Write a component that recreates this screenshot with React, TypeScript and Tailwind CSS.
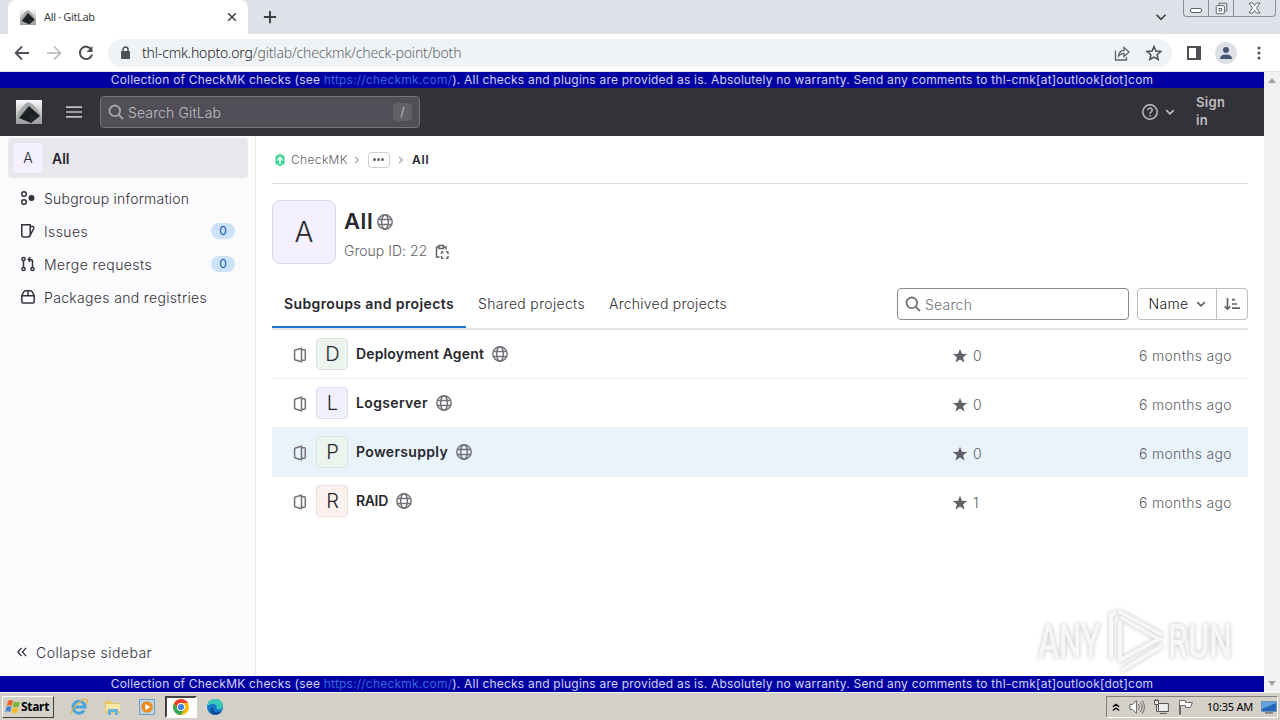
import type { ReactNode } from 'react'
import clsx from 'clsx'

type IconProps = { className?: string; children: ReactNode; size?: number; sw?: number }

function Icon({ className, children, size = 16, sw = 1.5 }: IconProps) {
  return (
    <svg
      width={size}
      height={size}
      viewBox="0 0 16 16"
      fill="none"
      stroke="currentColor"
      strokeWidth={sw}
      className={clsx('shrink-0', className)}
    >
      {children}
    </svg>
  )
}

const Globe = ({ className }: { className?: string }) => (
  <Icon className={clsx('text-[#737278]', className)} sw={1.5}>
    <circle cx="8" cy="8" r="7.2" />
    <ellipse cx="8" cy="8" rx="3.4" ry="7.2" />
    <path d="M1.3 5.6h13.4M1.3 10.4h13.4" />
  </Icon>
)

const Magnifier = ({ className }: { className?: string }) => (
  <Icon className={className} sw={1.8}>
    <circle cx="6.8" cy="6.8" r="5.3" />
    <path d="M10.8 10.8L15 15" />
  </Icon>
)

const Chevron = ({ className }: { className?: string }) => (
  <Icon size={12} sw={2.2} className={className}>
    <path d="M3 5.5l5 5 5-5" />
  </Icon>
)

const ProjectIcon = () => (
  <Icon sw={1.5} className="mt-0.5 text-[#737278]">
    <path d="M9.500 1.200v13.600L3.300 13a1 1 0 0 1-.7-1V4a1 1 0 0 1 .7-1z" />
    <path d="M10 2.700h2.300a1 1 0 0 1 1 1v8.600a1 1 0 0 1-1 1H10" />
  </Icon>
)

/* Dark crystal on a grey gradient, used as favicon and site logo */
function Crystal({ className }: { className?: string }) {
  return (
    <svg viewBox="0 0 26 24" preserveAspectRatio="none" className={clsx('shrink-0', className)}>
      <defs>
        <linearGradient id="crystalBg" x1="0" y1="0" x2="0" y2="1">
          <stop offset="0" stopColor="#fafafa" />
          <stop offset="1" stopColor="#9a9a9c" />
        </linearGradient>
      </defs>
      <rect width="26" height="24" fill="url(#crystalBg)" />
      <path d="M0 20Q3 7 12 2q10 3 14 18v2H0z" fill="#a5a8a9" />
      <path d="M13 6l11 10-9 7-12-5z" fill="#1b2022" />
      <path d="M13 6l-4 7-5 4z" fill="#343a3c" />
      <path d="M15 23l8-7-11-1z" fill="#24292b" />
    </svg>
  )
}

function TabStrip() {
  return (
    <div className="flex h-[34px] shrink-0 bg-[#dee1e8] pl-2">
      <div className="flex h-full w-60 items-center rounded-t-lg bg-white pl-3 pr-2.5">
        <Crystal className="h-4 w-4" />
        <span className="ml-2 flex-1 font-[Noto_Sans] text-[11px] tracking-[-0.35px] text-[#3c4043]">All · GitLab</span>
        <Icon size={12} sw={2} className="text-[#3c4043]">
          <path d="M3 3l10 10M13 3L3 13" />
        </Icon>
      </div>
      <Icon size={14} sw={2.2} className="ml-[15px] mt-2.5 text-[#3c4043]">
        <path d="M8 1v14M1 8h14" />
      </Icon>
      <Icon size={12} sw={2.2} className="ml-auto mr-4 mt-[11px] text-[#3c4043]">
        <path d="M2 5l6 6 6-6" />
      </Icon>
      <div className="mr-1 flex h-[17px] w-[93px] rounded-b border border-t-0 border-[#8b8e94] text-[#60646b]">
        <div className="flex w-[25px] items-end justify-center border-r border-[#8b8e94] pb-[3px]">
          <span className="h-[5px] w-3 rounded-[2px] border border-[#60646b] bg-white" />
        </div>
        <div className="flex w-[25px] items-center justify-center border-r border-[#8b8e94]">
          <Icon size={13} sw={1.2}>
            <path d="M5 4V1.500h9.500V11H12" />
            <rect x="1.500" y="4.500" width="10" height="10" rx="1" fill="#fff" />
            <rect x="5" y="8" width="3" height="3" />
          </Icon>
        </div>
        <div className="flex flex-1 items-center justify-center">
          <svg width="13" height="12" viewBox="0 0 13 12" fill="#fff" stroke="currentColor">
            <path d="M1 1h3.500l2 2.500L8.500 1H12L8.600 6 12 11H8.500l-2-2.500L4.500 11H1l3.400-5z" />
          </svg>
        </div>
      </div>
    </div>
  )
}

function AddressBar() {
  return (
    <div className="flex h-[38px] shrink-0 items-center border-b border-[#dfe1e4] bg-white">
      <Icon sw={1.8} className="ml-3.5 text-[#4d5156]">
        <path d="M15 8H2M8 1.500L1.600 8 8 14.500" />
      </Icon>
      <Icon sw={1.600} className="ml-4 text-[#b4b6b9]">
        <path d="M1 8h13M8 1.500L14.400 8 8 14.500" />
      </Icon>
      <Icon sw={2} className="ml-4 text-[#4d5156]">
        <path d="M13.300 4.400A6.200 6.200 0 1 0 14.100 9.500" />
        <path d="M14.500 1v6H8.500z" fill="currentColor" stroke="none" />
      </Icon>
      <div className="ml-3.5 flex h-7 w-[1064px] items-center rounded-full bg-[#f0f3f5] pl-3 pr-2.5">
        <svg width="11" height="14" viewBox="0 0 11 14" className="shrink-0 text-[#4d5156]">
          <rect x="1" y="5" width="9" height="8" rx="1" fill="currentColor" />
          <path d="M3 5.500V3.500a2.500 2.500 0 0 1 5 0v2" fill="none" stroke="currentColor" strokeWidth="1.500" />
        </svg>
        <span className="ml-[11px] flex-1 whitespace-nowrap font-[Noto_Sans] text-sm font-light tracking-[-0.18px] text-[#5f6368]">
          <span className="text-[#202124]">thl-cmk.hopto.org</span>/gitlab/checkmk/check-point/both
        </span>
        <Icon sw={1.300} className="text-[#5f6368]">
          <path d="M1.500 5.500v9.500h11v-3M4.500 11c.5-4 3-5.500 5.500-5.500V2.500l5 4.500-5 4.500V8.500c-2.500 0-4 .7-5.500 2.500z" />
        </Icon>
        <Icon sw={1.500} className="ml-4 text-[#4d5156]">
          <path d="M8 1.500l1.900 4.600 4.900.4-3.700 3.200 1.100 4.800L8 12l-4.200 2.500 1.100-4.800L1.200 6.500l4.900-.4z" />
        </Icon>
      </div>
      <svg width="14" height="14" viewBox="0 0 14 14" className="ml-[15px] text-[#4d5156]">
        <path d="M1 1h12v12H1z" fill="none" stroke="currentColor" strokeWidth="2" />
        <path d="M9 1h4v12H9z" fill="currentColor" />
      </svg>
      <svg width="22" height="22" viewBox="0 0 22 22" className="ml-3.5">
        <circle cx="11" cy="11" r="11" fill="#dde1e6" />
        <circle cx="11" cy="8" r="3" fill="#475672" />
        <path d="M5 17c0-3 2-4.500 6-4.500s6 1.500 6 4.500z" fill="#475672" />
      </svg>
      <svg width="4" height="14" viewBox="0 0 4 14" fill="#4d5156" className="ml-5">
        <circle cx="2" cy="2" r="1.500" />
        <circle cx="2" cy="7" r="1.500" />
        <circle cx="2" cy="12" r="1.500" />
      </svg>
    </div>
  )
}

function Banner() {
  return (
    <div className="flex h-4 shrink-0 items-center justify-center whitespace-nowrap bg-[#0000a2] text-[12px] tracking-[0.21px] text-[#d4d4f4]">
      <span>
        Collection of CheckMK checks (see <span className="text-[#3568d8]">https://checkmk.com/</span>). All checks and plugins are
        provided as is. Absolutely no warranty. Send any comments to thl-cmk[at]outlook[dot]com
      </span>
    </div>
  )
}

function Header() {
  return (
    <header className="flex h-12 shrink-0 items-center bg-[#333238] pl-4 text-[#bfbfc3]">
      <Crystal className="h-6 w-[26px]" />
      <Icon sw={1.700} className="ml-6">
        <path d="M0 3.200h16M0 8h16M0 12.800h16" />
      </Icon>
      <div className="ml-[18px] flex h-8 w-80 items-center rounded border border-[#75747b] bg-[#504f57] px-[7px]">
        <Magnifier className="text-[#a9a8ae]" />
        <span className="ml-1 mt-px flex-1 text-sm font-light tracking-[0.13px]">Search GitLab</span>
        <span className="flex h-[18px] w-[19px] items-center justify-center rounded-sm bg-[#626168] text-xs">/</span>
      </div>
      <Icon sw={1.500} className="ml-auto">
        <circle cx="8" cy="8" r="7.200" />
        <path d="M5.800 6.300a2.200 2.200 0 1 1 3.300 1.900c-.8.500-1.100.8-1.100 1.600M8 10.900v1.500" />
      </Icon>
      <Chevron className="ml-1.5" />
      <a className="-mt-0.5 ml-5 mr-9 w-8 text-[13px] font-semibold leading-[18px] tracking-[0.3px]">Sign in</a>
    </header>
  )
}

const navItems = [
  {
    label: 'Subgroup information',
    track: 'tracking-[0.21px]',
    icon: (
      <>
        <circle cx="4" cy="4" r="2.300" />
        <circle cx="4" cy="12" r="2.300" />
        <circle cx="11.500" cy="8" r="3" fill="currentColor" stroke="none" />
      </>
    ),
  },
  {
    label: 'Issues',
    track: 'tracking-[0.4px]',
    count: 0,
    icon: <path d="M1.800 1.800h8.400v9.700a2.500 2.500 0 0 1-2.500 2.500H3.300a1.500 1.500 0 0 1-1.500-1.500zM10.200 3.600h2.500a1.200 1.200 0 0 1 1.100 1.700l-3.800 7.300" />,
  },
  {
    label: 'Merge requests',
    track: 'tracking-[0.42px]',
    count: 0,
    icon: (
      <>
        <circle cx="3.500" cy="3" r="1.600" />
        <circle cx="3.500" cy="13" r="1.600" />
        <circle cx="12.500" cy="13" r="1.600" />
        <path d="M3.500 4.600v6.800M12.500 11.400V5.500a2 2 0 0 0-2-2H8.500M10.300 1.200L8.200 3.500l2.100 2.300" />
      </>
    ),
  },
  {
    label: 'Packages and registries',
    track: 'tracking-[0.34px]',
    icon: <path d="M1.800 6.700h12.400v6a1.300 1.300 0 0 1-1.300 1.300H3.100a1.300 1.300 0 0 1-1.300-1.300zM1.800 6.700L4 2.500q.4-.7 1.200-.7h5.600q.8 0 1.200.7l2.200 4.200M8 1.800v4.900" />,
  },
]

function Sidebar() {
  return (
    <aside className="flex w-64 shrink-0 flex-col border-r border-[#ececef] bg-[#fbfafd] pt-0.5">
      <div className="mx-2 mr-[7px] flex h-10 items-center rounded bg-[#e8e7ec] pl-1 text-[#28272d]">
        <span className="flex h-8 w-8 items-center justify-center rounded border border-[#e7e2ef] bg-[#f4f0ff] text-sm font-light">A</span>
        <span className="ml-2 mt-px text-sm font-semibold">All</span>
      </div>
      <nav className="mt-1 flex flex-col">
        {navItems.map(item => (
          <a key={item.label} className="flex h-[33px] items-center pl-5 pr-5 text-[#333238]">
            <Icon className="-mt-0.5">{item.icon}</Icon>
            <span className={clsx('ml-2 flex-1 text-sm font-light', item.track)}>{item.label}</span>
            {item.count !== undefined && (
              <span className="mb-0.5 flex h-4 w-6 items-center justify-center rounded-full bg-[#cbe2f9] text-xs text-[#0b5cad]">
                {item.count}
              </span>
            )}
          </a>
        ))}
      </nav>
      <button className="mb-[11px] mt-auto flex h-6 items-center pl-4 text-[#333238]">
        <Icon size={12} sw={1.800} className="-mt-0.5">
          <path d="M7.500 2.500L2.500 8l5 5.500M13.500 2.500L8.500 8l5 5.500" />
        </Icon>
        <span className="ml-2 text-sm font-light tracking-[0.46px]">Collapse sidebar</span>
      </button>
    </aside>
  )
}

const projects = [
  { name: 'Deployment Agent', color: 'bg-[#ecf4ee] border-[#dbe5dd]', stars: 0, track: 'tracking-[0.14px]' },
  { name: 'Logserver', color: 'bg-[#f1f0ff] border-[#dfdeec]', stars: 0, track: 'tracking-[0.35px]' },
  { name: 'Powersupply', color: 'bg-[#ecf4ee] border-[#d9e4df]', stars: 0, track: 'tracking-[0.33px]', hovered: true },
  { name: 'RAID', color: 'bg-[#fcf1ef] border-[#eddedb]', stars: 1, track: 'tracking-[-0.35px]' },
]

function Breadcrumbs() {
  return (
    <div className="flex h-12 items-center border-b border-[#dcdcde]">
      <svg width="16" height="16" viewBox="0 0 16 16">
        <path d="M8 1l5 3.200v7.600L8 15l-5-3.200V4.200z" fill="#a4f0cc" />
        <path d="M8 2.200l4 2.600v6.400l-4 2.600-4-2.600V4.800z" fill="#2fd08e" />
        <path d="M8 4l3 3v2L9 8.300V12H7V8.300L5 9V7z" fill="#d4fae8" />
      </svg>
      <span className="ml-[3px] text-xs font-light tracking-[0.36px] text-[#626168]">CheckMK</span>
      <Icon size={10} sw={2} className="ml-1 text-[#a4a3a8]">
        <path d="M5 3l5 5-5 5" />
      </Icon>
      <span className="ml-1.5 flex h-4 w-[22px] items-center justify-center gap-px rounded border border-[#cfced3]">
        {[0, 1, 2].map(i => (
          <i key={i} className="h-[3px] w-[3px] rounded-full bg-[#626168]" />
        ))}
      </span>
      <Icon size={10} sw={2} className="ml-1.5 text-[#a4a3a8]">
        <path d="M5 3l5 5-5 5" />
      </Icon>
      <span className="ml-1.5 text-xs font-semibold tracking-[0.8px] text-[#28272d]">All</span>
    </div>
  )
}

function Tabs() {
  return (
    <div className="mt-4 flex h-[50px] border-b-2 border-[#e4e4e6] text-sm text-[#333238]">
      <div className="flex h-12 w-[194px] items-center justify-center whitespace-nowrap border-b-2 border-[#1f75cb] pt-0.5 font-semibold tracking-[0.39px] text-[#28272d]">
        Subgroups and projects
      </div>
      <div className="flex h-12 items-center pl-3 font-light tracking-[0.33px]">Shared projects</div>
      <div className="flex h-12 items-center pl-6 font-light tracking-[0.25px]">Archived projects</div>
      <div className="ml-auto mt-2 flex h-8 w-[232px] items-center rounded border border-[#89888d] px-[7px]">
        <Magnifier className="text-[#737278]" />
        <span className="ml-1 mt-px font-light tracking-[0.25px] text-[#737278]">Search</span>
      </div>
      <div className="ml-2 mt-2 flex h-8 w-[111px] rounded border border-[#bfbfc3]">
        <button className="flex w-[79px] items-center justify-center gap-1.5 border-r border-[#bfbfc3] pl-px font-light tracking-[0.35px] text-[#18171d]">
          Name
          <Chevron className="text-[#626168]" />
        </button>
        <button className="flex flex-1 items-center justify-center text-[#626168]">
          <Icon sw={1.700}>
            <path d="M3.500 2v11M.7 10.300L3.500 13l2.800-2.700M8 3.700h3M8 8h5M8 12.200h8" />
          </Icon>
        </button>
      </div>
    </div>
  )
}

function Content() {
  return (
    <main className="flex flex-1 flex-col px-4">
      <Breadcrumbs />
      <div className="mt-4 flex h-16">
        <div className="flex h-16 w-16 items-center justify-center rounded-lg border border-[#ddd6e8] bg-[#f4f0ff] text-[28px] font-light text-[#28272d]">
          A
        </div>
        <div className="ml-2 flex flex-col">
          <div className="flex h-[43px] items-center">
            <h1 className="text-[22px] font-semibold tracking-[0.6px] text-[#28272d]">All</h1>
            <Globe className="ml-1 mt-px" />
          </div>
          <div className="-mt-0.5 flex h-5 items-center text-sm font-light tracking-[0.03px] text-[#626168]">
            Group ID: 22
            <Icon className="ml-[7px] mt-0.5 text-[#626168]">
              <path d="M5 3H2.500v10H5.500M9.500 3h2.500v2.500M5 1.500h4.500v3H5z" />
              <path d="M7.500 10V8.500q0-.8.800-.8H9.500M12 7.700h1.200q.8 0 .8.800V10M14 12v1.500q0 .8-.8.800H12M9.500 14.300H8.300q-.8 0-.8-.8V12" />
            </Icon>
          </div>
        </div>
      </div>
      <Tabs />
      <ul>
        {projects.map((p, i) => (
          <li
            key={p.name}
            className={clsx(
              'flex h-[49px] items-center border-b pl-5 pr-4 text-sm',
              p.hovered ? 'border-[#e9f3fc] bg-[#e9f3fc]' : i === 0 ? 'border-[#ececef]' : i === 1 ? 'border-[#e9f3fc]' : 'border-transparent'
            )}
          >
            <ProjectIcon />
            <span className={clsx('ml-2 flex h-8 w-8 items-center justify-center rounded border pl-px text-xl font-light text-[#28272d]', p.color)}>
              {p.name[0]}
            </span>
            <span className={clsx('ml-2 font-semibold text-[#28272d]', p.track)}>{p.name}</span>
            <Globe className="ml-2" />
            <span className="ml-auto flex w-[187px] items-center pt-1 font-light text-[#626168]">
              <svg width="16" height="16" viewBox="0 0 16 16" fill="#626168">
                <path d="M8 .8l1.900 4.900 5.300.3-4.100 3.300 1.400 5.200L8 11.600l-4.500 2.900 1.400-5.200L.8 6l5.300-.3z" />
              </svg>
              <span className="ml-[5px]">{p.stars}</span>
            </span>
            <span className="whitespace-nowrap pt-1 font-light tracking-[0.33px] text-[#626168]">6 months ago</span>
          </li>
        ))}
      </ul>
    </main>
  )
}

function Watermark() {
  return (
    <div className="absolute left-[1036px] top-[606px]">
      <svg width="204" height="68" viewBox="0 0 204 68" className="drop-shadow-[0_0_2px_#c0c0c0]">
        <g fill="#f7f7f7" fontFamily="Roboto, sans-serif" fontSize="48" fontWeight="500">
          <text transform="translate(2 52) scale(.66 1)">ANY</text>
          <text transform="translate(132 52) scale(.67 1)">RUN</text>
        </g>
        <g fill="none" stroke="#f7f7f7" strokeWidth="4">
          <path d="M84 15v39l39-21-39-22" />
          <path d="M75 53V9l5-3M82 5l44 24M86 64l40-24" />
        </g>
      </svg>
    </div>
  )
}

function QuickLaunch() {
  return (
    <div className="ml-4 flex h-full items-center">
      <svg width="18" height="18" viewBox="0 0 18 18" fill="none">
        <path d="M14 12.500A6 6 0 1 1 15 9H4" stroke="#4aa3df" strokeWidth="3" />
        <path d="M2 16C-1 12 13-1 17 2c1 1 0 3-1 4" stroke="#e0b53a" strokeWidth="1.200" />
      </svg>
      <svg width="18" height="18" viewBox="0 0 18 18" className="ml-4">
        <path d="M1 3h6l1 2h8v10H1z" fill="#e8c763" />
        <path d="M2 6h14v7H2z" fill="#f7e7a6" />
        <path d="M4 17v-6h10v6h-3v-3H7v3z" fill="#62b4dc" />
      </svg>
      <svg width="16" height="16" viewBox="0 0 16 16" className="ml-[17px]">
        <rect x=".5" y=".5" width="15" height="15" fill="#b9d5e8" stroke="#6e9fc2" />
        <circle cx="8" cy="8" r="5.800" fill="#f08a1c" />
        <path d="M6.300 4.800L11.300 8l-5 3.200z" fill="#fff" />
      </svg>
      <div className="ml-2.5 flex h-[22px] w-8 items-center justify-center border-2 border-b-white border-l-[#404040] border-r-white border-t-[#404040] bg-white">
        <svg width="16" height="16" viewBox="0 0 16 16">
          <circle cx="8" cy="8" r="8" fill="#fbbc05" />
          <path d="M1.100 4A8 8 0 0 1 15 4H8a4 4 0 0 0-3.500 6z" fill="#ea4335" />
          <path d="M1.100 4A8 8 0 0 0 8 16l3.500-6a4 4 0 0 1-7 0z" fill="#34a853" />
          <circle cx="8" cy="8" r="4" fill="#fff" />
          <circle cx="8" cy="8" r="3.100" fill="#4285f4" />
        </svg>
      </div>
      <svg width="16" height="16" viewBox="0 0 16 16" className="ml-2.5">
        <circle cx="8" cy="8" r="8" fill="#1478c8" />
        <path d="M.2 7C1 2 4 0 8 0c5 0 8 3 8 6.500 0 2.500-2 4-4.500 4-1.800 0-2.500-.8-1.800-2C10.500 6 7 3 .2 7z" fill="#38c8b8" />
        <path d="M6 8c-1 4 3 6.500 8.500 4.500C12 16 8 16.500 5.500 15 2.500 12.500 3.500 9 6 8z" fill="#0c4a96" />
      </svg>
    </div>
  )
}

function Taskbar() {
  return (
    <div className="flex h-7 shrink-0 items-center border-t border-[#f4f2ee] bg-[#d4d0c8] text-black">
      <button className="ml-0.5 flex h-[22px] w-[52px] items-center border border-b-[#404040] border-l-white border-r-[#404040] border-t-white pl-0.5">
        <svg width="16" height="16" viewBox="0 0 16 16" className="shrink-0">
          <path d="M3 2q3-2 5 0L6.800 7q-2.500-1.500-5 0z" fill="#e8662a" />
          <path d="M9 2.500q3 1.500 6 0L13.700 7.500q-3 1.500-6 0z" fill="#79b638" />
          <path d="M1.500 8q2.500-1.500 5 0L5.200 13q-2.500-1.500-5 0z" fill="#3f86d8" />
          <path d="M7.500 8.500q3 1.500 6 0L12.200 13.500q-3 1.500-6 0z" fill="#f2bd2c" />
        </svg>
        <span className="font-[Noto_Sans] text-xs font-bold tracking-[-0.3px]">Start</span>
      </button>
      <QuickLaunch />
      <div className="ml-auto mr-0.5 flex h-[22px] w-[172px] items-center border border-b-white border-l-[#808080] border-r-white border-t-[#808080] pl-1">
        <Icon size={10} sw={2}>
          <path d="M3 7.500l5-4 5 4M3 13.500l5-4 5 4" />
        </Icon>
        <svg width="16" height="16" viewBox="0 0 16 16" className="ml-2" fill="#fff" stroke="#6b6966">
          <path d="M1 5.500h2.500l4-4v13l-4-4H1z" />
          <path d="M9.500 5q2 3 0 6M11.500 3q3.500 5 0 10M13.500 1.500q4 6.500 0 13" fill="none" />
        </svg>
        <svg width="17" height="16" viewBox="0 0 17 16" className="ml-2" fill="#eee" stroke="#555">
          <path d="M5.500 4.500h10v8h-10zM7 14.500h7" />
          <path d="M1.500 1.500h4v4h-4zM3.500 5.500v7h2M2.500 0v2M4.500 0v2" />
        </svg>
        <svg width="16" height="16" viewBox="0 0 16 16" className="ml-2" fill="#fff" stroke="#6b6966">
          <path d="M1.500 15.500v-14h6v2h7l-2 5h-5v-2h-5v9z" />
        </svg>
        <span className="ml-[13px] mt-px whitespace-nowrap font-[Noto_Sans] text-[11px] tracking-[-0.2px]">10:35 AM</span>
        <svg width="16" height="14" viewBox="0 0 16 14" className="ml-2">
          <path d="M.5 1.500h15v10H.5z" fill="#2366b8" stroke="#6d90b5" />
          <path d="M1 2h14v1L1 9z" fill="#62a3df" />
          <path d="M4 13h8" stroke="#444" />
        </svg>
      </div>
    </div>
  )
}

export default function App() {
  return (
    <div className="relative flex h-[720px] w-[1280px] flex-col overflow-hidden bg-white font-[Inter,Liberation_Sans,sans-serif]">
      <TabStrip />
      <AddressBar />
      <div className="flex h-[620px] shrink-0">
        <div className="flex w-[1264px] flex-col">
          <Banner />
          <Header />
          <div className="flex flex-1">
            <Sidebar />
            <Content />
          </div>
          <Banner />
        </div>
        <div className="flex w-4 flex-col items-center justify-between bg-[#f1f1f1] py-1.5">
          <svg width="8" height="5" viewBox="0 0 8 5" fill="#a3a3a3">
            <path d="M0 5l4-5 4 5z" />
          </svg>
          <svg width="8" height="5" viewBox="0 0 8 5" fill="#a3a3a3">
            <path d="M0 0l4 5 4-5z" />
          </svg>
        </div>
      </div>
      <Taskbar />
      <Watermark />
    </div>
  )
}
